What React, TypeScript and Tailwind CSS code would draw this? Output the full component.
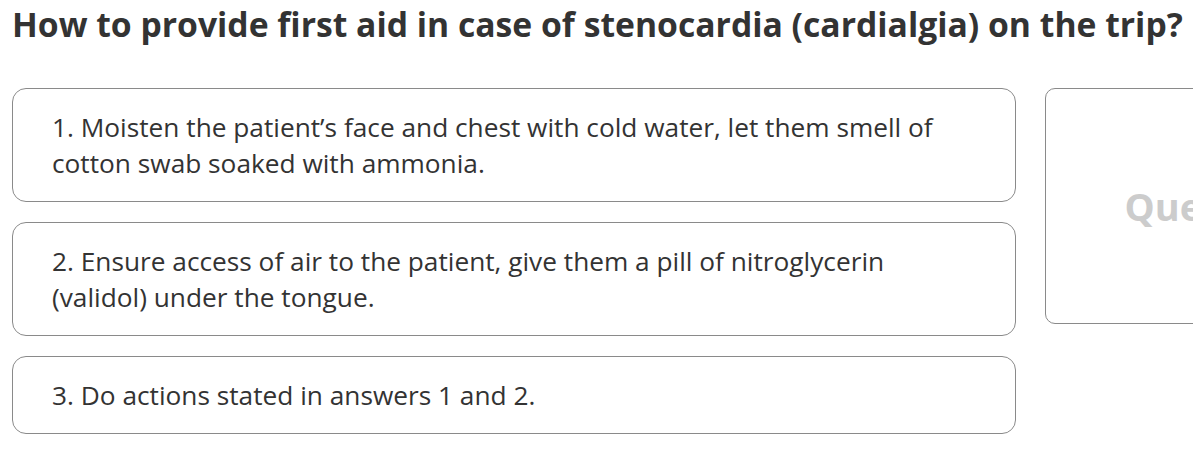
import React from 'react';

const answers = [
  '1. Moisten the patient\u2019s face and chest with cold water, let them smell of cotton swab soaked with ammonia.',
  '2. Ensure access of air to the patient, give them a pill of nitroglycerin (validol) under the tongue.',
  '3. Do actions stated in answers 1 and 2.',
];

export default function App() {
  return (
    <div className="w-[1193px] h-[462px] overflow-hidden bg-white text-[#333] font-['Open_Sans',sans-serif]">
      <h1 className="pl-[12px] pt-[1px] text-[33.7px] leading-[46px] font-bold whitespace-nowrap">
        How to provide first aid in case of stenocardia (cardialgia) on the trip?
      </h1>
      <div className="flex items-start gap-[29px] pl-[12px] pt-[41px]">
        <div className="flex flex-col gap-[20px] w-[1004px] shrink-0">
          {answers.map((a) => (
            <div
              key={a}
              className="border border-[#8a8a8a] rounded-[14px] pl-[39px] pr-[60px] py-[20px] text-[26.25px] leading-[36px]"
            >
              {a}
            </div>
          ))}
        </div>
        <div className="w-[332px] h-[236px] shrink-0 border border-[#8a8a8a] rounded-[10px] flex items-center justify-center">
          <span className="text-[38px] font-bold text-[#cccccc]">Question</span>
        </div>
      </div>
    </div>
  );
}
